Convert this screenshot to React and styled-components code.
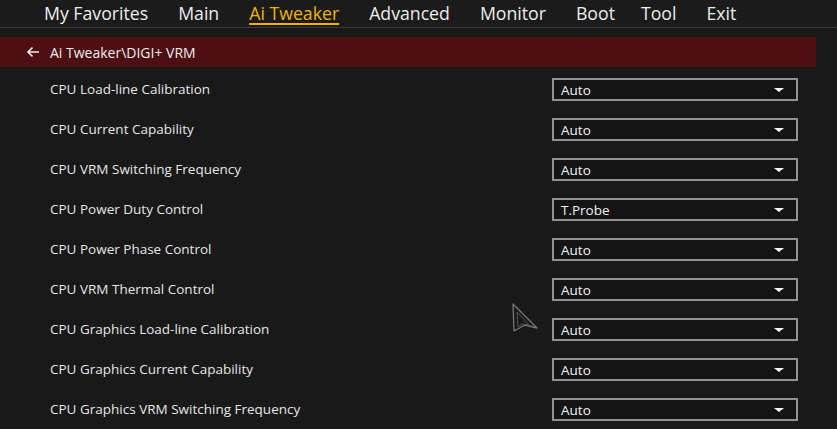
import React from 'react';
import styled, {createGlobalStyle} from "styled-components";

const GlobalStyle = createGlobalStyle`
    html, body {
        margin: 0;
        padding: 0;
        background: #1a1919;
        font-family: "Open Sans", "Noto Sans", sans-serif;
        overflow: hidden;
    }
`;

const tabs = ["My Favorites", "Main", "Ai Tweaker", "Advanced", "Monitor", "Boot", "Tool", "Exit"];

const items = [
    ["CPU Load-line Calibration", "Auto"],
    ["CPU Current Capability", "Auto"],
    ["CPU VRM Switching Frequency", "Auto"],
    ["CPU Power Duty Control", "T.Probe"],
    ["CPU Power Phase Control", "Auto"],
    ["CPU VRM Thermal Control", "Auto"],
    ["CPU Graphics Load-line Calibration", "Auto"],
    ["CPU Graphics Current Capability", "Auto"],
    ["CPU Graphics VRM Switching Frequency", "Auto"],
];

const App = () => {
    return (
        <Page>
            <GlobalStyle />
            <Nav>
                {tabs.map(t => (
                    <Tab key={t} active={t === "Ai Tweaker"} tight={t === "Tool"}>{t}</Tab>
                ))}
            </Nav>
            <Crumb>
                <svg width="14" height="12" viewBox="0 0 14 12">
                    <path d="M13 6H2M6.5 1.5L2 6l4.5 4.5" stroke="#eee" strokeWidth="1.6" fill="none" />
                </svg>
                <span>Ai Tweaker\DIGI+ VRM</span>
            </Crumb>
            <List>
                {items.map(([label, value]) => (
                    <Row key={label}>
                        <Label>{label}</Label>
                        <Select>
                            <span>{value}</span>
                            <Caret />
                        </Select>
                    </Row>
                ))}
            </List>
            <Pointer width="28" height="30" viewBox="0 0 28 30">
                <path d="M2 2L26 26L14 23L3 29Z" fill="#1a1919" stroke="#777" strokeWidth="1.3" strokeLinejoin="round" />
                <path d="M6 10L18 23L11 22L7 25Z" fill="none" stroke="#555" strokeWidth="1" strokeLinejoin="round" />
            </Pointer>
        </Page>
    );
};

export default App;

const Page = styled.div`
    position: relative;
    width: 837px;
    height: 429px;
    background: #1a1919;
    overflow: hidden;
`;

const Nav = styled.div`
    height: 28px;
    display: flex;
    align-items: flex-start;
    padding-left: 44px;
    gap: 30px;
    border-bottom: 1px solid #3a3a3a;
    background: #1b1b1b;
    box-sizing: border-box;
`;

const Tab = styled.div`
    font-size: 17.7px;
    line-height: 26px;
    margin-left: ${p => p.tight ? "-4px" : "0"};
    color: ${p => p.active ? "#f0b400" : "#ededed"};
    text-decoration: ${p => p.active ? "underline" : "none"};
    text-underline-offset: 3px;
    text-decoration-thickness: 2px;
`;

const Crumb = styled.div`
    margin-top: 9px;
    width: 816px;
    height: 30px;
    background: #4d0f11;
    display: flex;
    align-items: center;
    gap: 10px;
    padding-left: 26px;
    box-sizing: border-box;
    > span {
        color: #eeeeee;
        font-size: 14px;
    }
`;

const List = styled.div`
    display: flex;
    flex-direction: column;
    padding-top: 11px;
`;

const Row = styled.div`
    height: 40px;
    display: flex;
    align-items: flex-start;
    justify-content: space-between;
    padding-left: 50px;
    padding-right: 39px;
`;

const Label = styled.div`
    color: #e6e6e6;
    font-size: 13.5px;
    line-height: 22px;
`;

const Select = styled.div`
    width: 246px;
    height: 23px;
    box-sizing: border-box;
    border: 2px solid #929292;
    display: flex;
    align-items: center;
    justify-content: space-between;
    padding: 0 12px 0 7px;
    color: #f2f2f2;
    font-size: 13.5px;
    background: #141414;
`;

const Caret = styled.div`
    width: 0;
    height: 0;
    border-left: 5px solid transparent;
    border-right: 5px solid transparent;
    border-top: 4px solid #ffffff;
`;

const Pointer = styled.svg`
    position: absolute;
    left: 511px;
    top: 302px;
`;
